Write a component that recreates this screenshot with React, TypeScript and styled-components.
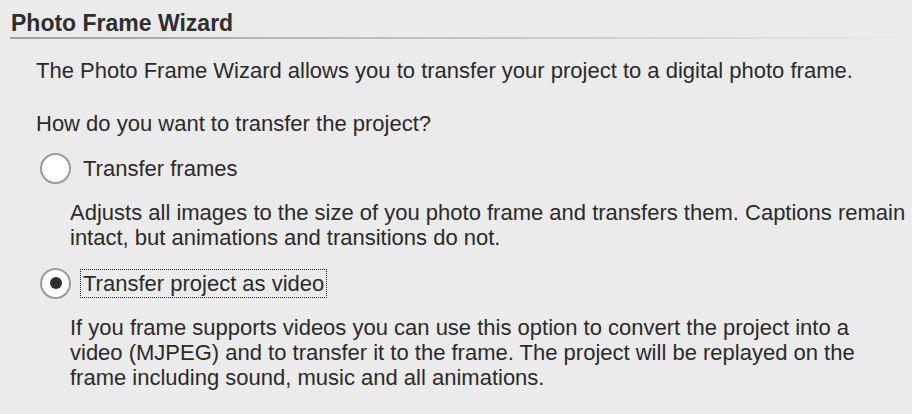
import { FC } from "react";
import styled, { createGlobalStyle } from "styled-components";

const GlobalStyle = createGlobalStyle`
  html, body {
    margin: 0;
    padding: 0;
    background: #ebebeb;
  }
  body {
    font-family: "Liberation Sans", Arial, sans-serif;
    color: #2a2a2a;
  }
`;

const Page = styled.div`
  width: 912px;
  height: 414px;
  overflow: hidden;
  padding: 9px 0 0 10px;
  box-sizing: border-box;
`;

const Title = styled.h1`
  margin: 0;
  padding: 0 0 0 1px;
  font-size: 23px;
  line-height: 28px;
  font-weight: 700;
  color: #2e2e2e;
  border-bottom: 2px solid transparent;
  border-image: linear-gradient(to right, #a0a0a0, #d2d2d2 70%, #ebebeb) 1;
`;

const Body = styled.div`
  padding: 19px 0 0 26px;
  font-size: 22px;
  line-height: 25px;
`;

const Intro = styled.p`
  margin: 0;
  white-space: nowrap;
`;

const Question = styled.p`
  margin: 28px 0 0;
`;

const Option = styled.div<{ gap: number }>`
  display: flex;
  align-items: center;
  gap: 9px;
  margin: ${({ gap }) => gap}px 0 0 4px;
  height: 32px;
`;

const Radio = styled.span<{ checked: boolean }>`
  width: 27px;
  height: 27px;
  border-radius: 50%;
  border: 2px solid #9a9a9a;
  background: #fff;
  display: flex;
  align-items: center;
  justify-content: center;
  flex: none;

  &::after {
    content: "";
    display: ${({ checked }) => (checked ? "block" : "none")};
    width: 12px;
    height: 12px;
    border-radius: 50%;
    background: #303030;
  }
`;

const OptionLabel = styled.span<{ focused?: boolean }>`
  padding: 1px 2px;
  border: 1px dotted ${({ focused }) => (focused ? "#222" : "transparent")};
`;

const Note = styled.p`
  margin: 16px 0 0 34px;
  white-space: nowrap;
`;

const NoteLine = styled.span`
  display: block;
`;

const options = [
  {
    label: "Transfer frames",
    checked: false,
    note: [
      "Adjusts all images to the size of you photo frame and transfers them. Captions remain",
      "intact, but animations and transitions do not.",
    ],
  },
  {
    label: "Transfer project as video",
    checked: true,
    note: [
      "If you frame supports videos you can use this option to convert the project into a",
      "video (MJPEG) and to transfer it to the frame. The project will be replayed on the",
      "frame including sound, music and all animations.",
    ],
  },
];

const App: FC = () => (
  <>
    <GlobalStyle />
    <Page>
      <Title>Photo Frame Wizard</Title>
      <Body>
        <Intro>
          The Photo Frame Wizard allows you to transfer your project to a digital photo frame.
        </Intro>
        <Question>How do you want to transfer the project?</Question>
        {options.map((o, i) => (
          <div key={o.label}>
            <Option gap={i === 0 ? 16 : 17}>
              <Radio checked={o.checked} />
              <OptionLabel focused={o.checked}>{o.label}</OptionLabel>
            </Option>
            <Note>
              {o.note.map((line) => (
                <NoteLine key={line}>{line}</NoteLine>
              ))}
            </Note>
          </div>
        ))}
      </Body>
    </Page>
  </>
);

export default App;
